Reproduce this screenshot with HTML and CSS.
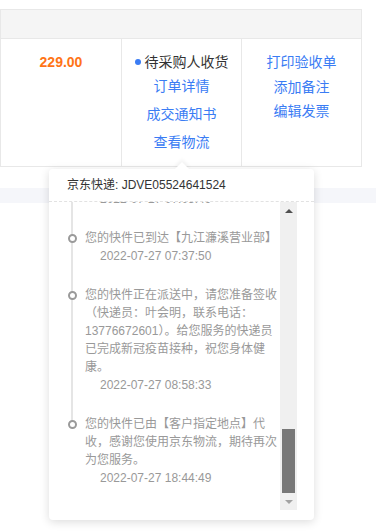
FILE: index.html
```html
<!DOCTYPE html>
<html lang="zh-CN">
<head>
    <meta charset="UTF-8">
    <meta name="viewport" content="width=device-width, initial-scale=1.0">
    <title>订单物流</title>
    <link rel="stylesheet" href="styles.css">
</head>
<body>
    <div class="order-table">
        <div class="order-head"></div>
        <div class="order-row">
            <div class="cell cell-amount">
                <span class="amount">229.00</span>
            </div>
            <div class="cell cell-status">
                <div class="status"><i class="status-dot"></i>待采购人收货</div>
                <a class="link link-first">订单详情</a>
                <a class="link link-next">成交通知书</a>
                <a class="link link-next">查看物流</a>
            </div>
            <div class="cell cell-actions">
                <a class="link">打印验收单</a>
                <a class="link">添加备注</a>
                <a class="link">编辑发票</a>
            </div>
        </div>
    </div>
    <div class="band"></div>

    <div class="logistics-popup">
        <span class="popup-arrow"></span>
        <div class="popup-title">京东快递: JDVE05524641524</div>
        <div class="popup-body">
            <div class="track-viewport">
                <ul class="track-list">
                    <li class="track-item track-item-cut">
                        <div class="track-time">2022-07-27 07:05:49</div>
                    </li>
                    <li class="track-item">
                        <div class="track-text">您的快件已到达【九江濂溪营业部】</div>
                        <div class="track-time">2022-07-27 07:37:50</div>
                    </li>
                    <li class="track-item">
                        <div class="track-text">您的快件正在派送中，请您准备签收（快递员：叶会明，联系电话：13776672601）。给您服务的快递员已完成新冠疫苗接种，祝您身体健康。</div>
                        <div class="track-time">2022-07-27 08:58:33</div>
                    </li>
                    <li class="track-item track-item-last">
                        <div class="track-text">您的快件已由【客户指定地点】代收，感谢您使用京东物流，期待再次为您服务。</div>
                        <div class="track-time">2022-07-27 18:44:49</div>
                    </li>
                </ul>
            </div>
            <div class="scrollbar">
                <span class="scroll-btn"><i class="arrow-up"></i></span>
                <div class="scroll-track"><div class="scroll-thumb"></div></div>
                <span class="scroll-btn"><i class="arrow-down"></i></span>
            </div>
        </div>
    </div>
</body>
</html>
```

FILE: styles.css
```css
body {
    margin: 0;
    background-color: #fff;
    font-family: "Liberation Sans", "Noto Sans CJK SC", sans-serif;
    color: #333;
}
.order-table {
    width: 362px;
    margin-top: 9px;
}
.order-head {
    height: 30px;
    box-sizing: border-box;
    border: 1px solid #e8e8e8;
    background-color: #f5f5f5;
}
.order-row {
    display: grid;
    grid-template-columns: 121px 120px 120px;
    height: 127px;
    border-left: 1px solid #e8e8e8;
    border-bottom: 1px solid #e8e8e8;
}
.cell {
    box-sizing: border-box;
    border-right: 1px solid #e8e8e8;
    padding-top: 13px;
    text-align: center;
    font-size: 14px;
    line-height: 20px;
}
.amount {
    font-weight: bold;
    color: #ff7416;
}
.cell-status, .cell-actions {
    display: flex;
    flex-direction: column;
    align-items: center;
}
.cell-actions {
    gap: 4.5px;
}
.status {
    display: flex;
    align-items: center;
    color: #333;
}
.status-dot {
    width: 6px;
    height: 6px;
    margin-right: 4px;
    border-radius: 50%;
    background-color: #3a7cf4;
}
.link {
    color: #3a7cf4;
    cursor: pointer;
}
.link-first {
    margin-top: 4px;
}
.link-next {
    margin-top: 8px;
}
.band {
    height: 15px;
    margin-top: 21px;
    background-color: #f5f6fa;
}

.logistics-popup {
    position: absolute;
    top: 169px;
    left: 49px;
    width: 265px;
    padding-bottom: 10px;
    border-radius: 4px;
    background-color: #fff;
    box-shadow: 0 2px 10px rgba(0, 0, 0, 0.14);
    font-size: 12px;
}
.popup-arrow {
    position: absolute;
    top: -5px;
    left: 128px;
    width: 10px;
    height: 10px;
    background-color: #fff;
    transform: rotate(45deg);
    box-shadow: -2px -2px 4px rgba(0, 0, 0, 0.05);
}
.popup-title {
    position: relative;
    height: 32px;
    line-height: 32px;
    padding: 0 18px;
    border-bottom: 1px dashed #e2e2e2;
    border-radius: 4px 4px 0 0;
    background-color: #fff;
    color: #333;
}
.popup-body {
    display: flex;
    height: 308px;
    padding-right: 17px;
}
.track-viewport {
    flex: 1;
    overflow: hidden;
}
.track-list {
    list-style: none;
    margin: -12px 0 0 22px;
    padding: 0;
    color: #999;
    line-height: 18px;
}
.track-item {
    position: relative;
    padding: 0 0 21px 14px;
}
.track-item::before {
    content: "";
    position: absolute;
    top: 0;
    bottom: 0;
    left: 0;
    width: 2px;
    background-color: #e5e5e5;
}
.track-item::after {
    content: "";
    position: absolute;
    top: 4.5px;
    left: -3.5px;
    width: 9px;
    height: 9px;
    box-sizing: border-box;
    border: 2px solid #9a9a9a;
    border-radius: 50%;
    background-color: #fff;
}
.track-item-cut::after {
    display: none;
}
.track-item-last::before {
    bottom: auto;
    height: 8px;
}
.track-time {
    padding-left: 15px;
}

.scrollbar {
    display: flex;
    flex-direction: column;
    width: 17px;
    background-color: #f0f0f0;
}
.scroll-btn {
    display: flex;
    align-items: center;
    justify-content: center;
    height: 17px;
}
.arrow-up {
    border-left: 4px solid transparent;
    border-right: 4px solid transparent;
    border-bottom: 4px solid #505050;
}
.arrow-down {
    border-left: 4px solid transparent;
    border-right: 4px solid transparent;
    border-top: 4px solid #a3a3a3;
}
.scroll-track {
    flex: 1;
    display: flex;
    flex-direction: column;
    justify-content: flex-end;
    align-items: center;
}
.scroll-thumb {
    width: 13px;
    height: 64px;
    background-color: #787878;
}
```
